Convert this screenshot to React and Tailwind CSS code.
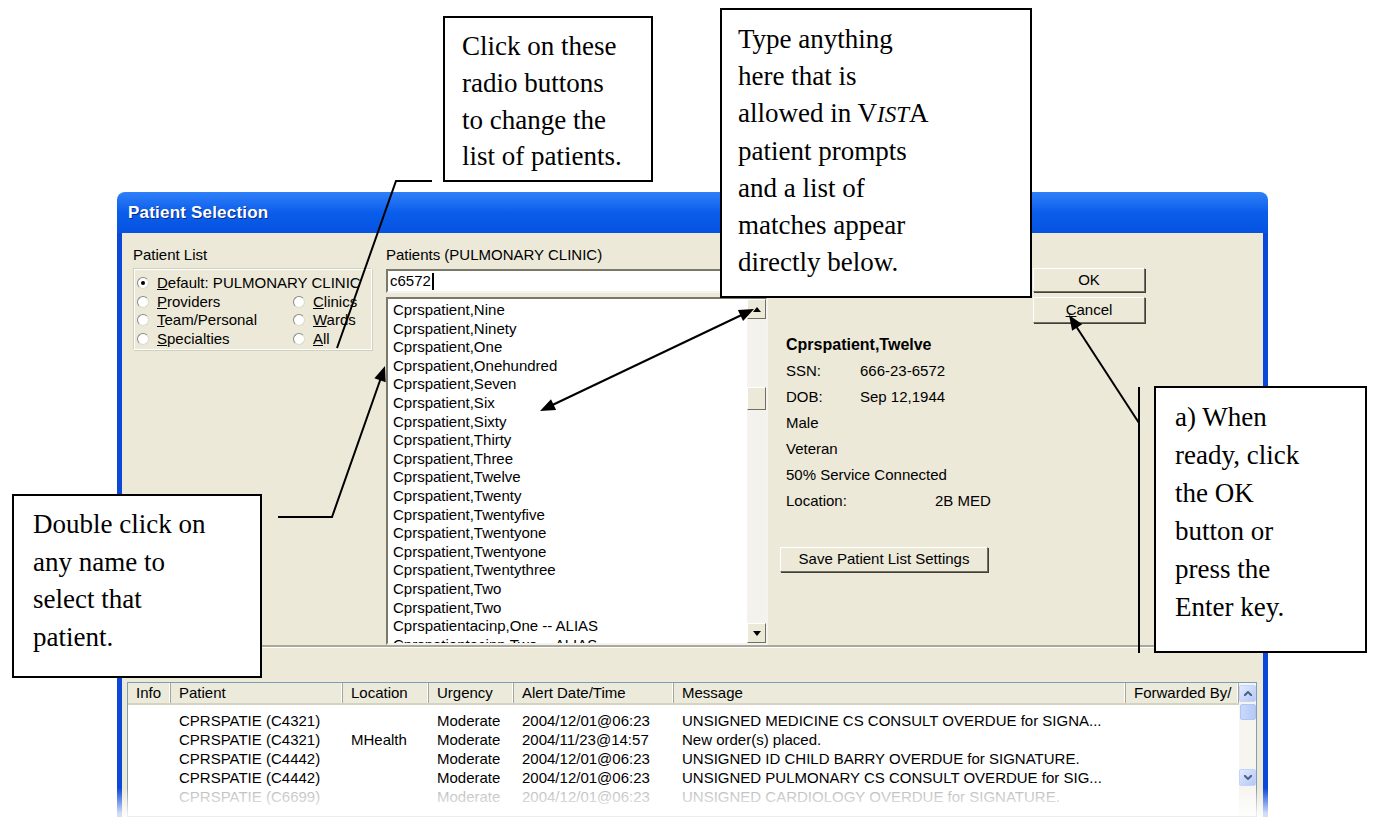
import React from 'react';

const patients = [
  'Cprspatient,Nine',
  'Cprspatient,Ninety',
  'Cprspatient,One',
  'Cprspatient,Onehundred',
  'Cprspatient,Seven',
  'Cprspatient,Six',
  'Cprspatient,Sixty',
  'Cprspatient,Thirty',
  'Cprspatient,Three',
  'Cprspatient,Twelve',
  'Cprspatient,Twenty',
  'Cprspatient,Twentyfive',
  'Cprspatient,Twentyone',
  'Cprspatient,Twentyone',
  'Cprspatient,Twentythree',
  'Cprspatient,Two',
  'Cprspatient,Two',
  'Cprspatientacinp,One -- ALIAS',
  'Cprspatientacinp,Two -- ALIAS',
];

const alerts = [
  ['CPRSPATIE (C4321)', '', 'Moderate', '2004/12/01@06:23', 'UNSIGNED MEDICINE CS CONSULT OVERDUE for SIGNA...'],
  ['CPRSPATIE (C4321)', 'MHealth', 'Moderate', '2004/11/23@14:57', 'New order(s) placed.'],
  ['CPRSPATIE (C4442)', '', 'Moderate', '2004/12/01@06:23', 'UNSIGNED ID CHILD BARRY OVERDUE for SIGNATURE.'],
  ['CPRSPATIE (C4442)', '', 'Moderate', '2004/12/01@06:23', 'UNSIGNED PULMONARY CS CONSULT OVERDUE for SIG...'],
  ['CPRSPATIE (C6699)', '', 'Moderate', '2004/12/01@06:23', 'UNSIGNED CARDIOLOGY OVERDUE for SIGNATURE.'],
];

function Radio({ checked }) {
  return (
    <span className="relative inline-block w-[12px] h-[12px] shrink-0 rounded-full bg-white border border-t-[#8a8a80] border-l-[#8a8a80] border-r-[#dcdacd] border-b-[#dcdacd]">
      {checked && <span className="absolute left-[3px] top-[3px] w-[4px] h-[4px] rounded-full bg-black" />}
    </span>
  );
}

function ArrowBtn({ up }) {
  return (
    <div className="w-[19px] h-[20px] bg-[#ECE9D8] border border-t-white border-l-white border-r-[#716F64] border-b-[#716F64] flex items-center justify-center">
      <svg width="8" height="5" viewBox="0 0 8 5">
        {up ? <path d="M0 5 L4 0 L8 5 Z" fill="#000" /> : <path d="M0 0 L4 5 L8 0 Z" fill="#000" />}
      </svg>
    </div>
  );
}

function LunaArrow({ up }) {
  return (
    <div className="w-[17px] h-[17px] rounded-[2px] bg-gradient-to-br from-[#e1eafe] to-[#b4c8f6] border border-[#c3d3fd] flex items-center justify-center">
      <svg width="8" height="5" viewBox="0 0 8 5">
        {up ? <path d="M0 5 L4 1 L8 5" stroke="#4d6185" strokeWidth="2" fill="none" /> : <path d="M0 0 L4 4 L8 0" stroke="#4d6185" strokeWidth="2" fill="none" />}
      </svg>
    </div>
  );
}

// arrow head polygon at (x2,y2) pointing away from (x1,y1)
function head(x1, y1, x2, y2, len = 15, half = 6) {
  const a = Math.atan2(y2 - y1, x2 - x1);
  const bx = x2 - len * Math.cos(a);
  const by = y2 - len * Math.sin(a);
  const px = -Math.sin(a) * half;
  const py = Math.cos(a) * half;
  return `${x2},${y2} ${bx + px},${by + py} ${bx - px},${by - py}`;
}

const cols = [
  ['Info', 'w-[43px]'],
  ['Patient', 'w-[172px]'],
  ['Location', 'w-[86px]'],
  ['Urgency', 'w-[85px]'],
  ['Alert Date/Time', 'w-[160px]'],
  ['Message', 'w-[452px]'],
  ['Forwarded By/', 'w-[113px]'],
];

export default function App() {
  return (
    <div className="relative w-[1373px] h-[838px] bg-white overflow-hidden font-['Liberation_Sans',Arial,sans-serif] text-[15px] text-black">
      <div className="pt-[192px] pl-[117px]">
        {/* dialog window */}
        <div className="w-[1151px]">
          <div className="h-[41px] rounded-t-[8px] bg-gradient-to-b from-[#2f80f8] via-[#0a5deb] to-[#0653e0] flex items-center pl-[11px]">
            <span className="text-white font-bold text-[17px] tracking-[0.2px] [text-shadow:1px_1px_0_#0a2a8a]">Patient Selection</span>
          </div>
          <div className="h-[584px] bg-[#ECE9D8] border-x-[5px] border-[#0b47d9] flex flex-col">
            {/* top section */}
            <div className="flex h-[418px]">
              <div className="ml-[11px] w-[239px] pt-[14px]">
                <div className="leading-[16px] h-[16px]">Patient List</div>
                <div className="mt-[5px] h-[82px] border border-t-[#d0d0bf] border-l-[#d0d0bf] border-r-white border-b-white shadow-[inset_1px_1px_0_white,1px_1px_0_#d0d0bf] overflow-hidden pt-[5px] pl-[3px]">
                  <div className="grid grid-cols-[156px_80px]">
                    <label className="col-span-2 flex items-center gap-[8px] h-[18.5px] whitespace-nowrap"><Radio checked /><span><u>D</u>efault: PULMONARY CLINIC</span></label>
                    <label className="flex items-center gap-[8px] h-[18.5px]"><Radio /><span><u>P</u>roviders</span></label>
                    <label className="flex items-center gap-[8px] h-[18.5px]"><Radio /><span><u>C</u>linics</span></label>
                    <label className="flex items-center gap-[8px] h-[18.5px]"><Radio /><span><u>T</u>eam/Personal</span></label>
                    <label className="flex items-center gap-[8px] h-[18.5px]"><Radio /><span><u>W</u>ards</span></label>
                    <label className="flex items-center gap-[8px] h-[18.5px]"><Radio /><span><u>S</u>pecialties</span></label>
                    <label className="flex items-center gap-[8px] h-[18.5px]"><Radio /><span><u>A</u>ll</span></label>
                  </div>
                </div>
              </div>

              <div className="ml-[14px] w-[382px] pt-[14px]">
                <div className="leading-[16px] h-[16px]">Patients (PULMONARY CLINIC)</div>
                <div className="mt-[6px] h-[24px] bg-white border-2 border-t-[#7a7868] border-l-[#7a7868] border-r-[#f4f3ee] border-b-[#f4f3ee] flex items-center pl-[2px]">
                  <span>c6572</span><span className="w-[2px] h-[17px] bg-black ml-[1px]" />
                </div>
                <div className="mt-[4px] h-[348px] bg-white border-2 border-t-[#7a7868] border-l-[#7a7868] border-r-[#f4f3ee] border-b-[#f4f3ee] flex overflow-hidden">
                  <div className="flex-1 pt-[2px] pl-[5px] overflow-hidden">
                    {patients.map((p, i) => (
                      <div key={i} className="h-[18.6px] leading-[18.6px] whitespace-nowrap">{p}</div>
                    ))}
                  </div>
                  <div className="w-[19px] bg-[#f3f2ec] flex flex-col">
                    <ArrowBtn up />
                    <div className="h-[68px]" />
                    <div className="h-[23px] bg-[#ECE9D8] border border-t-white border-l-white border-r-[#716F64] border-b-[#716F64]" />
                    <div className="flex-1" />
                    <ArrowBtn />
                  </div>
                </div>
              </div>

              <div className="ml-[12px] w-[252px] pt-[99px]">
                <div className="pl-[6px]">
                  <div className="h-[26px] leading-[26px] font-bold text-[16px]">Cprspatient,Twelve</div>
                  <div className="h-[26px] leading-[26px] flex"><span className="w-[74px]">SSN:</span><span>666-23-6572</span></div>
                  <div className="h-[26px] leading-[26px] flex"><span className="w-[74px]">DOB:</span><span>Sep 12,1944</span></div>
                  <div className="h-[26px] leading-[26px]">Male</div>
                  <div className="h-[26px] leading-[26px]">Veteran</div>
                  <div className="h-[26px] leading-[26px]">50% Service Connected</div>
                  <div className="h-[26px] leading-[26px] flex"><span className="w-[149px]">Location:</span><span>2B MED</span></div>
                </div>
                <button className="mt-[33px] w-[208px] h-[25px] bg-[#ECE9D8] border border-t-white border-l-white border-r-[#716F64] border-b-[#716F64] shadow-[1px_1px_0_#403f38] text-[15px]">
                  Save Patient List Settings
                </button>
              </div>

              <div className="ml-[1px] w-[112px] pt-[35px]">
                <button className="w-full h-[24px] bg-[#ECE9D8] border border-t-white border-l-white border-r-[#716F64] border-b-[#716F64] shadow-[1px_1px_0_#403f38]">OK</button>
                <button className="mt-[5px] w-full h-[26px] bg-[#ECE9D8] border border-t-white border-l-white border-r-[#716F64] border-b-[#716F64] shadow-[1px_1px_0_#403f38]"><u>C</u>ancel</button>
              </div>
            </div>

            {/* splitter */}
            <div className="h-[3px] border-t-2 border-[#aca899] border-b border-b-white" />

            <div className="mt-[16px] pl-[8px] h-[16px] leading-[16px]">Notifications</div>

            {/* notifications list */}
            <div className="mt-[2px] ml-[5px] w-[1130px] h-[140px] bg-white border border-[#7f9db9] flex overflow-hidden">
              <div className="flex-1 flex flex-col">
                <div className="h-[22px] flex bg-[#ebeadb] border-b-2 border-[#d6d2c2]">
                  {cols.map(([c, w]) => (
                    <div key={c} className={`${w} h-full pl-[8px] flex items-center border-r border-[#a8a698] shadow-[inset_-1px_0_0_white] whitespace-nowrap overflow-hidden`}>{c}</div>
                  ))}
                </div>
                <div className="pt-[6px]">
                  {alerts.map((r, i) => (
                    <div key={i} className={`h-[19px] leading-[19px] flex whitespace-nowrap ${i === 4 ? 'text-[#b8b8b8]' : ''}`}>
                      <div className="w-[43px]" />
                      <div className="w-[172px] pl-[8px]">{r[0]}</div>
                      <div className="w-[86px] pl-[8px]">{r[1]}</div>
                      <div className="w-[85px] pl-[8px]">{r[2]}</div>
                      <div className="w-[160px] pl-[8px]">{r[3]}</div>
                      <div className="w-[452px] pl-[8px] overflow-hidden">{r[4]}</div>
                    </div>
                  ))}
                </div>
              </div>
              <div className="w-[18px] bg-[#f6f5f0] flex flex-col pt-[2px] items-center">
                <LunaArrow up />
                <div className="mt-[2px] w-[16px] h-[16px] rounded-[2px] bg-gradient-to-r from-[#c9d8fc] to-[#b5c9f7] border border-[#b0c4f0]" />
                <div className="flex-1" />
                <div className="mb-[30px]"><LunaArrow /></div>
              </div>
            </div>
          </div>
        </div>
      </div>

      {/* bottom fade of the screenshot */}
      <div className="absolute left-0 right-0 top-[788px] h-[50px] bg-gradient-to-b from-white/0 via-white/80 to-white" />

      {/* connector lines */}
      <svg className="absolute inset-0 pointer-events-none" width="1373" height="838">
        <g stroke="#000" strokeWidth="2" fill="none">
          <path d="M432 181 H396 L337 348" />
          <path d="M544 409 L750 311" />
          <path d="M278 517 H332 L383 372" />
          <path d="M1139 387 V653" />
          <path d="M1139 423 L1072 320" />
        </g>
        <g fill="#000">
          <polygon points={head(650, 359, 754, 309)} />
          <polygon points={head(650, 359, 540, 411)} />
          <polygon points={head(332, 517, 385, 366)} />
          <polygon points={head(1139, 423, 1069, 315)} />
        </g>
      </svg>

      {/* callouts */}
      <div className="absolute left-[443px] top-[16px] w-[210px] h-[166px] bg-white border-2 border-black pl-[17px] pt-[10px] font-['Liberation_Serif',serif] text-[27px] leading-[36.8px]">
        Click on these<br />radio buttons<br />to change the<br />list of patients.
      </div>
      <div className="absolute left-[720px] top-[8px] w-[312px] h-[290px] bg-white border-2 border-black pl-[16px] pt-[11px] font-['Liberation_Serif',serif] text-[27px] leading-[36.8px]">
        Type anything<br />here that is<br />allowed in V<i className="text-[23px]">IST</i>A<br />patient prompts<br />and a list of<br />matches appear<br />directly below.
      </div>
      <div className="absolute left-[12px] top-[494px] w-[250px] h-[184px] bg-white border-2 border-black pl-[19px] pt-[10px] font-['Liberation_Serif',serif] text-[27px] leading-[37.7px]">
        Double click on<br />any name to<br />select that<br />patient.
      </div>
      <div className="absolute left-[1154px] top-[386px] w-[213px] h-[267px] bg-white border-2 border-black pl-[19px] pt-[10px] font-['Liberation_Serif',serif] text-[27px] leading-[38px]">
        a) When<br />ready, click<br />the OK<br />button or<br />press the<br />Enter key.
      </div>
    </div>
  );
}
